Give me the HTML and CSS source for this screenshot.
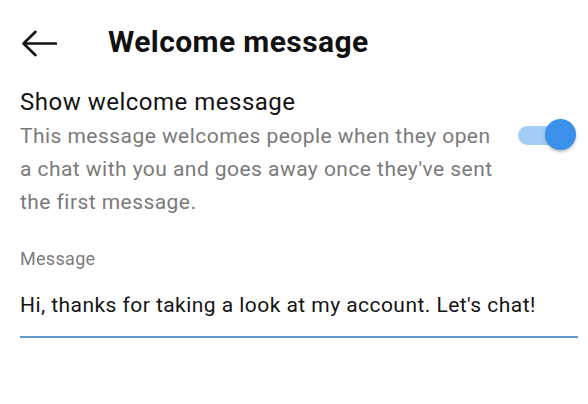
FILE: index.html
```html
<!DOCTYPE html>
<html lang="en">
<head>
<meta charset="utf-8">
<title>Welcome message</title>
<link rel="stylesheet" href="styles.css">
</head>
<body>
<div class="page">
  <header class="header">
    <svg class="back" width="36" height="27" viewBox="0 0 36 27" aria-hidden="true">
      <path d="M2.5 13.5 H35 M14.5 1.8 L2.5 13.5 L14.5 25.2" fill="none" stroke="#111" stroke-width="2.6" stroke-linecap="round" stroke-linejoin="round"/>
    </svg>
    <h1 class="title">Welcome message</h1>
  </header>
  <section class="setting">
    <div class="setting-text">
      <div class="setting-name">Show welcome message</div>
      <div class="setting-desc">This message welcomes people when they open a chat with you and goes away once they've sent the first message.</div>
    </div>
    <div class="toggle" role="switch" aria-checked="true">
      <span class="track"></span>
      <span class="knob"></span>
    </div>
  </section>
  <section class="field">
    <div class="field-label">Message</div>
    <div class="field-input">Hi, thanks for taking a look at my account. Let's chat!</div>
  </section>
</div>
</body>
</html>
```
FILE: styles.css
```css
* { box-sizing: border-box; }
html, body { margin: 0; padding: 0; background: #fff; }
body {
  width: 588px;
  height: 404px;
  overflow: hidden;
  font-family: Roboto, "Noto Sans", "Liberation Sans", sans-serif;
  color: #111;
}
.page {
  padding: 25px 10px 0 20px;
}
.header {
  display: flex;
  align-items: center;
  height: 34px;
}
.back {
  margin-left: 1px;
  margin-top: 2px;
  flex: none;
}
.title {
  margin: 0 0 0 51px;
  font-size: 30px;
  line-height: 34px;
  letter-spacing: 0.4px;
  font-weight: 700;
  color: #111;
}
.setting {
  display: flex;
  justify-content: space-between;
  align-items: flex-start;
  margin-top: 29px;
}
.setting-text {
  width: 482px;
}
.setting-name {
  font-size: 24px;
  line-height: 28px;
  letter-spacing: 0.5px;
  color: #141414;
}
.setting-desc {
  margin-top: 4px;
  font-size: 21px;
  line-height: 33px;
  letter-spacing: 0.45px;
  color: #7a7a7a;
}
.toggle {
  position: relative;
  width: 58px;
  height: 32px;
  margin-top: 31px;
  margin-right: 2px;
  flex: none;
}
.track {
  position: absolute;
  left: 0;
  top: 7px;
  width: 52px;
  height: 19px;
  border-radius: 10px;
  background: #a3cdf4;
}
.knob {
  position: absolute;
  right: 0;
  top: 0;
  width: 31px;
  height: 31px;
  border-radius: 50%;
  background: #3b90e9;
  box-shadow: 0 2px 3px rgba(0, 0, 0, 0.25);
}
.field {
  margin-top: 28px;
}
.field-label {
  font-size: 18px;
  line-height: 24px;
  letter-spacing: 0.3px;
  color: #7d7d7d;
}
.field-input {
  margin-top: 20px;
  font-size: 21px;
  line-height: 28px;
  letter-spacing: 0.45px;
  color: #141414;
  padding-bottom: 17px;
  border-bottom: 2px solid #6198c6;
}
```
